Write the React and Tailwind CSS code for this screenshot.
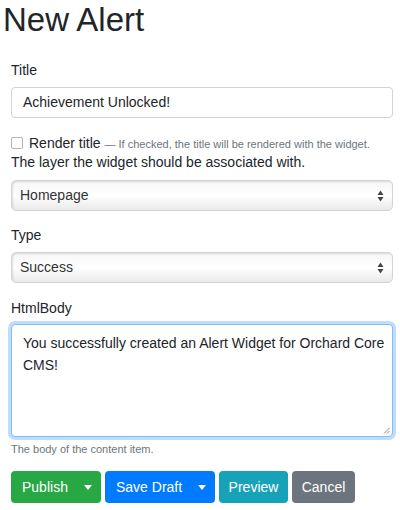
import React from "react";

function Caret() {
  return (
    <svg width="8" height="5" viewBox="0 0 8 5" className="fill-current">
      <path d="M0 0h8L4 5z" />
    </svg>
  );
}

function SelectArrows() {
  return (
    <svg width="7" height="12" viewBox="0 0 7 12" className="fill-[#444]">
      <path d="M3.5 0.5L6.5 5H0.5z" />
      <path d="M3.5 11.5L6.5 7H0.5z" />
    </svg>
  );
}

function FakeSelect({ value }) {
  return (
    <div className="flex h-[31px] items-center justify-between rounded-[5px] border border-[#d4d4d4] bg-gradient-to-b from-[#f6f6f6] via-[#ffffff] to-[#e9e9e9] pl-[8px] pr-[8px] text-[14px] text-[#333] shadow-[inset_1px_1px_2px_rgba(0,0,0,0.12)]">
      <span>{value}</span>
      <SelectArrows />
    </div>
  );
}

function Label({ children }) {
  return <div className="mb-[7px] text-[14px] leading-[20px] text-[#212529]">{children}</div>;
}

export default function App() {
  return (
    <div className="min-h-[510px] bg-white pl-[3px] pr-[7px] font-['Liberation_Sans',Arial,sans-serif] text-[#212529]">
      <h1 className="text-[33px] leading-[40px] font-normal">New Alert</h1>

      <div className="pl-[8px]">
        {/* Title */}
        <div className="mt-[20px]">
          <Label>Title</Label>
          <div className="flex h-[31px] items-center rounded-[4px] border border-[#ced4da] bg-white px-[11px] text-[14px]">
            Achievement Unlocked!
          </div>
        </div>

        {/* Render title */}
        <div className="mt-[16px] flex h-[18px] items-center gap-[6px] text-[14px] leading-[18px]">
          <span className="h-[12px] w-[12px] rounded-[2px] border border-[#b5b5b5] bg-white" />
          <span className="whitespace-nowrap">
            Render title{" "}
            <span className="text-[11px] text-[#6c757d]">— If checked, the title will be rendered with the widget.</span>
          </span>
        </div>

        {/* Layer */}
        <div>
          <div className="mb-[8px] text-[14px] leading-[20px]">The layer the widget should be associated with.</div>
          <FakeSelect value="Homepage" />
        </div>

        {/* Type */}
        <div className="mt-[14px]">
          <Label>Type</Label>
          <FakeSelect value="Success" />
        </div>

        {/* HtmlBody */}
        <div className="mt-[15px]">
          <div className="mb-[6px] text-[14px] leading-[20px]">HtmlBody</div>
          <div className="relative h-[113px] rounded-[4px] border border-[#80bdff] bg-white px-[11px] py-[7px] text-[14px] leading-[22px] shadow-[0_0_0_3px_rgba(0,123,255,0.25)]">
            <span className="whitespace-nowrap">You successfully created an Alert Widget for Orchard Core</span>
            <br />
            CMS!
            <svg width="7" height="7" viewBox="0 0 7 7" className="absolute bottom-[2px] right-[2px] stroke-[#888]">
              <path d="M1 6.5L6.5 1M4 6.5L6.5 4" strokeWidth="1" />
            </svg>
          </div>
          <div className="mt-[4px] text-[11px] leading-[16px] text-[#6c757d]">The body of the content item.</div>
        </div>

        {/* Buttons */}
        <div className="mt-[14px] flex gap-[4px] text-[14px] text-white">
          <div className="flex h-[32px] w-[90px] items-center rounded-[4px] bg-[#28a745]">
            <span className="pl-[11px]">Publish</span>
            <span className="ml-auto pr-[9px]"><Caret /></span>
          </div>
          <div className="flex h-[32px] w-[110px] items-center rounded-[4px] bg-[#007bff]">
            <span className="pl-[11px]">Save Draft</span>
            <span className="ml-auto pr-[9px]"><Caret /></span>
          </div>
          <div className="flex h-[32px] w-[69px] items-center justify-center rounded-[4px] bg-[#17a2b8]">Preview</div>
          <div className="flex h-[32px] w-[63px] items-center justify-center rounded-[4px] bg-[#6c757d]">Cancel</div>
        </div>
      </div>
    </div>
  );
}
